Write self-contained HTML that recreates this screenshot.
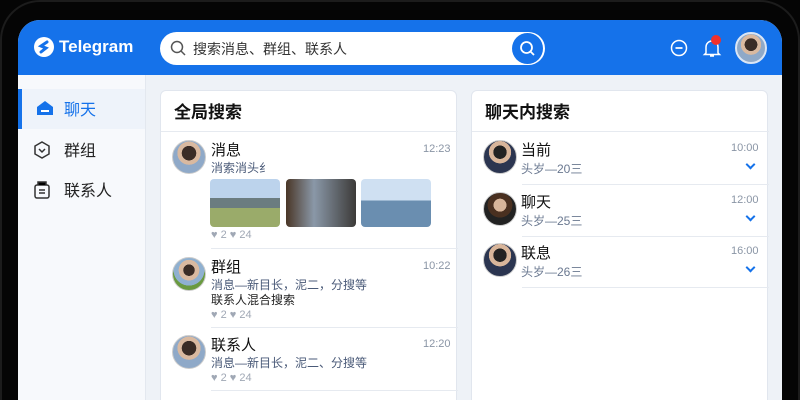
<!DOCTYPE html><html><head><meta charset="utf-8"><style>
*{margin:0;padding:0;box-sizing:border-box}
body{width:800px;height:400px;background:#050505;overflow:hidden;font-family:"Liberation Sans","Noto Sans CJK SC",sans-serif;position:relative}
.dev{position:absolute;left:0;top:0;width:800px;height:400px;border-radius:40px 40px 0 0;border:2px solid #1c1c1c;border-bottom:none}
.scr{position:absolute;left:18px;top:20px;width:764px;height:380px;border-radius:22px 22px 0 0;overflow:hidden;background:#eef2f7}
.hdr{position:absolute;left:0;top:0;width:764px;height:55px;background:#1572ea}
.logo{position:absolute;left:16px;top:17px;width:20px;height:20px;border-radius:50%;background:#fff}
.brand{position:absolute;left:41px;top:17px;color:#fff;font-size:17px;font-weight:bold}
.search{position:absolute;left:142px;top:12px;width:385px;height:33px;border-radius:17px;background:#fff}
.search span{position:absolute;left:33px;top:7px;font-size:14px;color:#333}
.sbtn{position:absolute;right:2px;top:1px;width:31px;height:31px;border-radius:50%;background:#1572ea}
.side{position:absolute;left:0;top:55px;width:128px;height:325px;background:#f7f9fc;border-right:1px solid #e3e8ef}
.nav{position:absolute;left:0;width:127px;height:40px;font-size:16px;color:#222}
.nav span{position:absolute;left:46px;top:7px}
.card{position:absolute;top:70px;background:#fff;border:1px solid #e1e6ee;border-radius:6px;height:320px}
.ct{font-size:17px;font-weight:bold;color:#111;position:absolute;left:13px;top:7px}
.hr{position:absolute;height:1px;background:#e6eaf0}
.av{position:absolute;width:34px;height:34px;border-radius:50%;background:radial-gradient(circle at 50% 38%,#3a2c26 0 28%,#d9b9a0 29% 45%,#8fa9c8 46%);border:1px solid #ccc}
.nm{position:absolute;font-size:15px;color:#111}
.sub{position:absolute;font-size:12px;color:#4a5a78}
.tm{position:absolute;font-size:11px;color:#8a95a5}
.lk{position:absolute;font-size:11px;color:#a0a8b5}
.img{position:absolute;width:70px;height:48px;border-radius:4px}
.chev{position:absolute;width:7px;height:7px;border-right:2px solid #1572ea;border-bottom:2px solid #1572ea;transform:rotate(45deg)}
</style></head><body>
<div class="dev"></div>
<div class="scr">
<div class="hdr">
<div class="logo"><svg width="20" height="20" viewBox="0 0 20 20"><path d="M13 5 L7 9 L12 11 L7 15" stroke="#1572ea" stroke-width="3" fill="none" stroke-linecap="round"/></svg></div>
<div class="brand">Telegram</div>
<div class="search"><svg style="position:absolute;left:10px;top:8px" width="17" height="17" viewBox="0 0 17 17"><circle cx="7" cy="7" r="5.5" stroke="#555" stroke-width="1.5" fill="none"/><path d="M11 11L15 15" stroke="#555" stroke-width="1.5"/></svg><span>搜索消息、群组、联系人</span>
<div class="sbtn"><svg style="position:absolute;left:7px;top:7px" width="17" height="17" viewBox="0 0 17 17"><circle cx="7.5" cy="7.5" r="5.5" stroke="#fff" stroke-width="1.8" fill="none"/><path d="M11.5 11.5L15 15" stroke="#fff" stroke-width="1.8"/></svg></div></div>
<svg style="position:absolute;left:652px;top:19px" width="18" height="18"><circle cx="9" cy="9" r="7.5" stroke="#fff" stroke-width="1.5" fill="none"/><path d="M5.5 9h7" stroke="#fff" stroke-width="1.8"/></svg>
<svg style="position:absolute;left:684px;top:17px" width="20" height="22"><path d="M4 16V10a6 6 0 0 1 12 0v6l1.5 1.5h-15z M8 19h4" stroke="#fff" stroke-width="1.5" fill="none"/></svg>
<div style="position:absolute;left:693px;top:15px;width:10px;height:10px;border-radius:50%;background:#f0302c"></div>
<div class="av" style="left:717px;top:12px;width:32px;height:32px;border:2px solid #dbe6f5"></div>
</div>
<div class="side">
<div class="nav" style="top:14px;background:#eef3fa;border-left:4px solid #1572ea"><svg style="position:absolute;left:14px;top:11px" width="18" height="16"><path d="M1 7L9 1l8 6v8H1z" fill="#1572ea"/><rect x="5" y="10" width="8" height="2" fill="#fff"/></svg><span style="color:#1572ea;left:42px">聊天</span></div>
<div class="nav" style="top:55px"><svg style="position:absolute;left:15px;top:11px" width="18" height="18"><path d="M9 1l7 4v8l-7 4-7-4V5z" stroke="#333" stroke-width="1.5" fill="none"/><path d="M6 8l3 3 3-3" stroke="#333" stroke-width="1.5" fill="none"/></svg><span>群组</span></div>
<div class="nav" style="top:95px"><svg style="position:absolute;left:15px;top:11px" width="18" height="18"><rect x="2" y="4" width="14" height="13" rx="2" stroke="#333" stroke-width="1.5" fill="none"/><path d="M5 4V1h8v3M6 9h6M6 12h6" stroke="#333" stroke-width="1.5"/></svg><span>联系人</span></div>
</div>
<div class="card" style="left:142px;width:297px">
<div class="ct">全局搜索</div>
<div class="hr" style="left:0;top:40px;width:297px"></div>
<div class="av" style="left:11px;top:49px"></div><div class="nm" style="left:50px;top:48px">消息</div><div class="tm" style="left:262px;top:52px">12:23</div>
<div class="sub" style="left:50px;top:68px">消索消头纟</div>
<div class="img" style="left:49px;top:88px;background:linear-gradient(#bcd3ec 0 40%,#6b7c80 40% 60%,#9aab6a 60%)"></div>
<div class="img" style="left:125px;top:88px;background:linear-gradient(90deg,#4a3626,#8a98a8 40%,#3c3a38)"></div>
<div class="img" style="left:200px;top:88px;background:linear-gradient(#cfe0f2 0 45%,#6a8eb0 45%)"></div>
<div class="lk" style="left:50px;top:138px">♥ 2 ♥ 24</div>
<div class="hr" style="left:50px;top:157px;width:247px"></div>
<div class="av" style="left:11px;top:166px;background:radial-gradient(circle at 50% 38%,#3a2c26 0 22%,#d9b9a0 23% 40%,#8fb0d0 41% 60%,#6a9a40 61%)"></div><div class="nm" style="left:50px;top:165px">群组</div><div class="tm" style="left:262px;top:169px">10:22</div>
<div class="sub" style="left:50px;top:185px">消息—新目长，泥二，分搜等</div>
<div class="sub" style="left:50px;top:200px;color:#222">联系人混合搜索</div>
<div class="lk" style="left:50px;top:218px">♥ 2 ♥ 24</div>
<div class="hr" style="left:50px;top:236px;width:247px"></div>
<div class="av" style="left:11px;top:244px"></div><div class="nm" style="left:50px;top:243px">联系人</div><div class="tm" style="left:262px;top:247px">12:20</div>
<div class="sub" style="left:50px;top:263px">消息—新目长，泥二、分搜等</div>
<div class="lk" style="left:50px;top:281px">♥ 2 ♥ 24</div>
<div class="hr" style="left:50px;top:299px;width:247px"></div>
</div>
<div class="card" style="left:453px;width:297px">
<div class="ct">聊天内搜索</div>
<div class="hr" style="left:0;top:40px;width:297px"></div>
<div class="av" style="left:11px;top:49px;background:radial-gradient(circle at 50% 35%,#222 0 25%,#d8b59a 26% 42%,#2b3550 43%)"></div><div class="nm" style="left:49px;top:48px">当前</div><div class="sub" style="left:49px;top:69px;color:#6a7890">头岁—20三</div><div class="tm" style="left:259px;top:51px">10:00</div><div class="chev" style="left:275px;top:70px"></div>
<div class="hr" style="left:50px;top:93px;width:247px"></div>
<div class="av" style="left:11px;top:101px;background:radial-gradient(circle at 50% 38%,#d8b59a 0 25%,#4a3020 26% 48%,#222 49%)"></div><div class="nm" style="left:49px;top:100px">聊天</div><div class="sub" style="left:49px;top:121px;color:#6a7890">头岁—25三</div><div class="tm" style="left:259px;top:103px">12:00</div><div class="chev" style="left:275px;top:122px"></div>
<div class="hr" style="left:50px;top:145px;width:247px"></div>
<div class="av" style="left:11px;top:152px;background:radial-gradient(circle at 50% 35%,#222 0 25%,#d8b59a 26% 42%,#2b3550 43%)"></div><div class="nm" style="left:49px;top:151px">联息</div><div class="sub" style="left:49px;top:172px;color:#6a7890">头岁—26三</div><div class="tm" style="left:259px;top:154px">16:00</div><div class="chev" style="left:275px;top:173px"></div>
<div class="hr" style="left:50px;top:196px;width:247px"></div>
</div>
</div>
</body></html>
